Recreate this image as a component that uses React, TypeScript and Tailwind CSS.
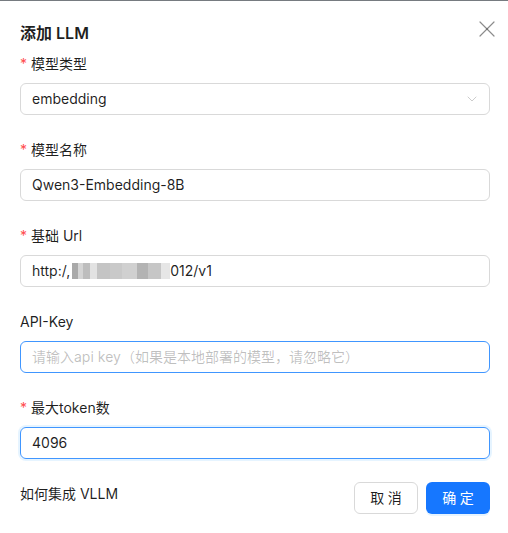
import { X, ChevronDown } from "lucide-react";

const font = { fontFamily: 'Inter, "Noto Sans CJK SC", sans-serif' };

function Label({ text, required }: { text: string; required?: boolean }) {
  return (
    <div className="flex items-center h-[22px] mb-2 text-sm text-[rgba(0,0,0,0.88)]">
      {required && <span className="text-[#ff4d4f] mr-1 text-sm leading-none">*</span>}
      <span>{text}</span>
    </div>
  );
}

// pixelated mosaic that hides part of the url
const BLUR = [
  { w: 6, c: "bg-[#a9a9a9]" },
  { w: 5, c: "bg-[#d4d4d4]" },
  { w: 7, c: "bg-[#bdbdbd]" },
  { w: 7, c: "bg-[#e2e2e2]" },
  { w: 13, c: "bg-[#c4c4c4]" },
  { w: 12, c: "bg-[#c9c9c9]" },
  { w: 15, c: "bg-[#d0d0d0]" },
  { w: 11, c: "bg-[#b3b3b3]" },
  { w: 13, c: "bg-[#c6c6c6]" },
  { w: 9, c: "bg-[#e6e6e6]" },
];

export default function App() {
  return (
    <div className="w-[508px] h-[533px] bg-white overflow-hidden" style={font}>
      <div className="h-px bg-[#767b80]" />
      <div className="relative pl-5 pr-[18px] pt-[21px]">
        <button className="absolute right-[7px] top-[14px] text-[rgba(0,0,0,0.45)]">
          <X size={28} strokeWidth={1.05} />
        </button>
        <div className="text-base font-semibold text-[rgba(0,0,0,0.88)] leading-[22px] mb-[9px]">添加 LLM</div>

        <div className="mb-6">
          <Label text="模型类型" required />
          <div className="h-8 border border-[#d9d9d9] rounded-md pl-[11px] pr-[9px] flex items-center justify-between text-sm text-[rgba(0,0,0,0.88)]">
            <span>embedding</span>
            <ChevronDown size={16} strokeWidth={1.2} className="text-[rgba(0,0,0,0.25)]" />
          </div>
        </div>

        <div className="mb-6">
          <Label text="模型名称" required />
          <div className="h-8 border border-[#d9d9d9] rounded-md px-[11px] flex items-center text-sm text-[rgba(0,0,0,0.88)]">
            Qwen3-Embedding-8B
          </div>
        </div>

        <div className="mb-6">
          <Label text="基础 Url" required />
          <div className="h-8 border border-[#d9d9d9] rounded-md px-[11px] flex items-center text-sm text-[rgba(0,0,0,0.88)]">
            <span>http:/,</span>
            <span className="flex h-[16px] ml-[2px]">
              {BLUR.map((b, i) => (
                <span key={i} className={`h-full ${b.c}`} style={{ width: b.w }} />
              ))}
            </span>
            <span>012/v1</span>
          </div>
        </div>

        <div className="mb-6">
          <Label text="API-Key" />
          <div className="h-8 border border-[#4096ff] rounded-md px-[11px] flex items-center text-sm text-[rgba(0,0,0,0.25)]">
            请输入api key（如果是本地部署的模型，请忽略它）
          </div>
        </div>

        <div className="mb-6">
          <Label text="最大token数" required />
          <div className="h-8 border border-[#4096ff] rounded-md px-[11px] flex items-center text-sm text-[rgba(0,0,0,0.88)] shadow-[0_0_0_2px_rgba(5,145,255,0.1)]">
            4096
          </div>
        </div>

        <div className="flex items-start justify-between">
          <div className="text-sm text-[rgba(0,0,0,0.88)] leading-[22px]">如何集成 VLLM</div>
          <div className="flex gap-2 mt-[-1px]">
            <button className="h-8 w-[64px] border border-[#d9d9d9] rounded-md text-sm text-[rgba(0,0,0,0.88)] tracking-[0.25em] pl-[0.25em]">
              取消
            </button>
            <button className="h-8 w-[64px] rounded-md text-sm text-white bg-[#1677ff] tracking-[0.25em] pl-[0.25em] shadow-[0_2px_0_rgba(5,145,255,0.1)]">
              确定
            </button>
          </div>
        </div>
      </div>
    </div>
  );
}
